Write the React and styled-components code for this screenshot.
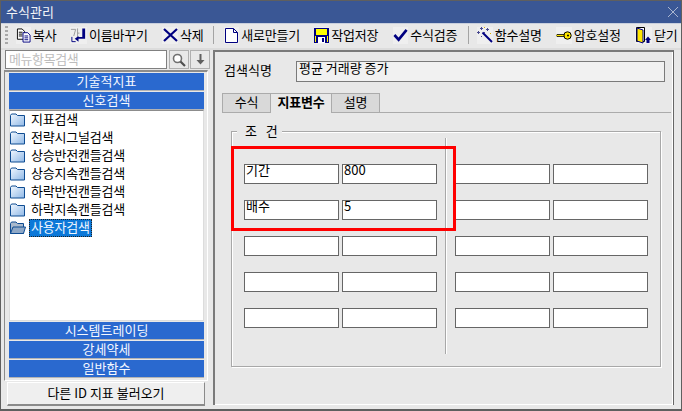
import React from "react";
import styled, { createGlobalStyle } from "styled-components";

const Global = createGlobalStyle`
  html, body { margin: 0; padding: 0; background: #e8e8e8; overflow: hidden; }
  * { box-sizing: border-box; }
`;

const Window = styled.div`
  width: 682px; height: 411px; display: flex; flex-direction: column;
  background: #e8e8e8; border: 1px solid #5f5f5f; border-bottom-width: 2px;
  font-family: "Noto Sans CJK KR", "Noto Sans", sans-serif; font-size: 13px; line-height: 16px; color: #000;
  letter-spacing: -0.2px; position: relative; overflow: hidden;
`;
const TitleBar = styled.div`
  height: 22px; flex: none; background: #3a5795; color: #f2f4f8; display: flex; align-items: center;
  justify-content: space-between; padding: 0 1px 0 5px; letter-spacing: 0;
`;
const Toolbar = styled.div`
  height: 27px; flex: none; display: flex; align-items: center; padding: 0 0 2px 4px;
  border-top: 1px solid #c8cfdd; border-bottom: 2px solid #dcdcdc;
`;
const Grip = styled.div`
  width: 3px; height: 19px; margin-right: 8px; flex: none;
  background: repeating-linear-gradient(to bottom, #a8a8a8 0 2px, transparent 2px 4px);
`;
const ToolButton = styled.div`
  display: flex; align-items: center; gap: 2px; margin-right: ${p => p.$gap}px; flex: none; white-space: nowrap;
`;
const IconCell = styled.span`
  display: flex; align-items: center; justify-content: center; width: ${p => p.$w}px; height: 17px;
  background: #efefef; flex: none;
`;
const Sep = styled.div`
  width: 1px; height: 18px; background: #a4a4a4; margin-right: ${p => p.$r}px; flex: none;
`;
const Body = styled.div`
  flex: 1; min-height: 0; display: flex; padding: 0 7px 4px 3px; gap: 5px;
`;
const Side = styled.div`
  width: 204px; flex: none; display: flex; flex-direction: column;
`;
const SearchRow = styled.div`
  height: 19px; display: flex; gap: 1px; padding-left: 1px; margin-bottom: 1px; flex: none;
`;
const SearchInput = styled.div`
  width: 162px; height: 19px; margin-right: 1px; flex: none; background: #fff; border: 1px solid #808080; color: #bdbdbd;
  padding: 0 3px; line-height: 15px; letter-spacing: -0.4px;
`;
const SquareBtn = styled.div`
  width: 20px; height: 19px; flex: none; border: 1px solid #b0b0b0; background: #e8e8e8; display: flex; align-items: center; justify-content: center;
`;
const Accordion = styled.div`
  height: 311px; flex: none; display: flex; flex-direction: column; padding: 1px 3px 1px 4px;
  border: 1px solid #8c8c8c; border-top-width: 2px; border-right: 1px solid #fff; border-bottom: 1px solid #fff;
`;
const Bar = styled.div`
  height: 18px; flex: none; background: #2a69cf; color: #f5f8ff; text-align: center; line-height: 16px;
  border-bottom: 1px solid #b4b4b4; margin-bottom: 1px; letter-spacing: 0;
`;
const Tree = styled.div`
  flex: 1; min-height: 0; background: #fff; border: 1px solid #dcdcdc; border-top: 1px solid #8c8c8c;
  margin-top: -1px; margin-bottom: 1px;
`;
const TreeRow = styled.div`
  height: 18px; display: flex; align-items: center; gap: 5px;
`;
const TreeLabel = styled.span`
  height: 18px; line-height: 16px; padding: 0 ${p => (p.$selected ? "2px" : "0")};
  margin-left: ${p => (p.$selected ? "-2px" : "0")};
  background: ${p => (p.$selected ? "#0c78d8" : "transparent")};
  color: ${p => (p.$selected ? "#eef6ff" : "#000")};
  outline: ${p => (p.$selected ? "1px dotted #222" : "none")}; outline-offset: -1px;
`;
const LoadBtn = styled.div`
  width: 198px; height: 24px; margin: 1px 0 0 3px; background: #efefef; text-align: center; line-height: 20px; flex: none;
  border: 1px solid #fff; border-right: 1px solid #8a8a8a; border-bottom: 2px solid #8a8a8a; letter-spacing: 0;
`;
const Main = styled.div`
  flex: 1; min-width: 0; display: flex; flex-direction: column; border-top: 2px solid #7a7a7a; border-left: 2px solid #7a7a7a;
  border-right: 1px solid #666; padding: 9px 0 0 7px; box-shadow: inset -1px -1px 0 #fff;
`;
const NameRow = styled.div`
  display: flex; align-items: flex-start; height: 20px; flex: none; padding-left: 2px;
`;
const NameLabel = styled.span`
  width: 72px; line-height: 18px; letter-spacing: 0;
`;
const NameInput = styled.div`
  width: 369px; height: 21px; border: 1px solid #7a7a7a; background: #f1f1f1; padding: 0 2px; line-height: 11px; letter-spacing: 0;
`;
const Tabs = styled.div`
  display: flex; margin-top: 12px; height: 20px; flex: none; position: relative; z-index: 1;
`;
const Tab = styled.div`
  width: ${p => p.$w}px; height: 20px; text-align: center; line-height: 16px;
  background: ${p => (p.$active ? "#e8e8e8" : "#d9d9d9")}; font-weight: ${p => (p.$active ? 700 : 400)};
  border: 1px solid #ababab; border-left-width: ${p => (p.$active ? 0 : 1)}px; border-right-width: ${p => (p.$active ? 0 : 1)}px;
  border-bottom-color: ${p => (p.$active ? "#e8e8e8" : "#ababab")};
`;
const TabPanel = styled.div`
  flex: 1; min-height: 0; border-top: 1px solid #ababab; margin-top: -1px; margin-right: 2px; padding: 18px 0 0 9px;
`;
const Group = styled.div`
  position: relative; width: 430px; height: 236px; border: 1px solid #a8a8a8; box-shadow: inset 1px 1px 0 #fff, 1px 1px 0 #fff;
  display: grid; grid-template-columns: 201px 1fr; padding: 6px 0 0 12px;
`;
const Legend = styled.span`
  position: absolute; top: -8px; left: 5px; background: #e8e8e8; padding: 0 1px 0 8px; letter-spacing: 3px;
  line-height: 13px; height: 15px;
`;
const Col = styled.div`
  height: 216px; display: grid; grid-template-columns: 95px 95px; column-gap: 3px; row-gap: 16px; padding-top: 26px;
  grid-auto-rows: 20px; align-content: start;
`;
const RightCol = styled(Col)`
  border-left: 1px solid #a8a8a8; box-shadow: inset 1px 0 0 #fff; padding-left: 9px;
`;
const Field = styled.div`
  height: 20px; background: #fff; border: 1px solid #666; padding: 0 1px; line-height: 10px; letter-spacing: 0;
`;
const RedBox = styled.div`
  position: absolute; left: 230px; top: 145px; width: 225px; height: 85px; border: 3px solid #f00; pointer-events: none;
`;

const Folder = ({ open }) => (
  <svg width="16" height="14" viewBox="0 0 16 14">
    <defs>
      <linearGradient id="fg" x1="0" y1="0" x2="1" y2="1">
        <stop offset="0" stopColor="#f2f8ff" />
        <stop offset="1" stopColor="#8fb8e6" />
      </linearGradient>
    </defs>
    {open ? (
      <>
        <path d="M.5 2.5 L1.5 1 H6 L7.5 2.5 H13.5 V12.5 H.5 Z" fill="#a9b9cc" stroke="#0f4c92" />
        <path d="M3 6 H15.5 L13.5 12.5 H.5 Z" fill="#8fa8c6" stroke="#0f4c92" />
      </>
    ) : (
      <path d="M.5 2.5 L1.5 1 H6 L7.5 2.5 H14.5 V13 H.5 Z" fill="url(#fg)" stroke="#0f4c92" />
    )}
  </svg>
);

const Navy = "#000080";
const IcoCopy = () => (
  <svg width="15" height="15" viewBox="0 0 16 15">
    <path d="M1.5 .5 H6.5 L9 3 V11.5 H1.5 Z" fill="#fff" stroke="#000" />
    <path d="M3 4 H7 M3 6 H7 M3 8 H7" stroke="#000" />
    <path d="M7.5 4.5 H12.5 L15 7 V14.5 H7.5 Z" fill="#fff" stroke="#000080" />
    <path d="M9 8 H13 M9 10 H13 M9 12 H13" stroke="#000080" />
  </svg>
);
const IcoRename = () => (
  <svg width="17" height="17" viewBox="0 0 18 17">
    <path d="M1 2 H6 L4 9 M8 1 V11 M8 6 H10" fill="none" stroke="#9a9a9a" />
    <path d="M2 10 V15 H6" fill="none" stroke="#000080" />
    <path d="M13 1 H16 V12 H9 V15 L5 12 L9 9 V10 H13 Z" fill="#000080" />
  </svg>
);
const IcoX = () => (
  <svg width="15" height="14" viewBox="0 0 15 14">
    <path d="M1 1 L14 13 M14 1 L1 13" stroke={Navy} strokeWidth="2.2" />
  </svg>
);
const IcoNew = () => (
  <svg width="13" height="15" viewBox="0 0 13 15">
    <path d="M.5 .5 H8.5 L12.5 4.5 V14.5 H.5 Z" fill="#fff" stroke={Navy} />
    <path d="M8.5 .5 V4.5 H12.5" fill="none" stroke={Navy} />
  </svg>
);
const IcoSave = () => (
  <svg width="15" height="15" viewBox="0 0 16 15" shapeRendering="crispEdges">
    <rect x="0" y="0" width="16" height="15" fill={Navy} />
    <rect x="2" y="1" width="12" height="6" fill="#ffff00" />
    <rect x="4" y="9" width="8" height="6" fill="#fff" />
    <rect x="9" y="10" width="2" height="4" fill={Navy} />
    <rect x="1" y="8" width="1" height="6" fill="#ffff00" />
    <rect x="14" y="8" width="1" height="6" fill="#ffff00" />
  </svg>
);
const IcoCheck = () => (
  <svg width="15" height="14" viewBox="0 0 16 14">
    <path d="M1.5 7 L6 12 L14.5 1.5" fill="none" stroke={Navy} strokeWidth="2.8" />
  </svg>
);
const IcoWand = () => (
  <svg width="16" height="16" viewBox="0 0 16 16" shapeRendering="crispEdges">
    <path d="M5.5 5.5 L15 15" stroke={Navy} strokeWidth="2" shapeRendering="auto" />
    <path d="M4 0 H5 V3 H4 Z M3 1 H6 V2 H3 Z M0 5 H3 V6 H0 Z M1 4 H2 V7 H1 Z M9 2 H12 V3 H9 Z M10 1 H11 V4 H10 Z M7 5 H8 V6 H7 Z M4 9 H5 V10 H4 Z" fill="#4a4a90" />
    <path d="M13 6 H14 V7 H13 Z M7 0 H8 V1 H7 Z" fill="#e0b000" />
  </svg>
);
const IcoKey = () => (
  <svg width="16" height="9" viewBox="0 0 16 9">
    <circle cx="11.5" cy="4.5" r="3.7" fill="#ffe600" stroke="#000" />
    <circle cx="12" cy="4.5" r="1" fill="#000" />
    <path d="M8 3.5 H1 L0 4.5 L1 5.5 H8 Z" fill="#ffe600" stroke="#000" strokeWidth="0.8" />
  </svg>
);
const IcoDoor = () => (
  <svg width="17" height="17" viewBox="0 0 17 17">
    <path d="M1.5 .5 H9.5 V14.5 H1.5 Z" fill="#fff" stroke="#000" />
    <path d="M2 1 L8 3 V16 L2 14 Z" fill="#ffe600" stroke={Navy} />
    <path d="M10 13 L13 9.5 L16 13 H14.5 V16 H11.5 V13 Z" fill={Navy} />
  </svg>
);
const IcoSearch = () => (
  <svg width="14" height="14" viewBox="0 0 14 14">
    <circle cx="5.5" cy="5.5" r="4" fill="#fff" stroke="#707070" strokeWidth="1.6" />
    <path d="M8.5 8.5 L13 13" stroke="#505050" strokeWidth="2.2" />
  </svg>
);
const IcoDown = () => (
  <svg width="9" height="11" viewBox="0 0 9 11">
    <path d="M4.5 0 V8" stroke="#606060" strokeWidth="2" />
    <path d="M0.5 6 H8.5 L4.5 10.5 Z" fill="#606060" />
  </svg>
);
const IcoClose = () => (
  <svg width="14" height="12" viewBox="0 0 14 12">
    <path d="M2 1 L12 11 M12 1 L2 11" stroke="#aab6d0" strokeWidth="1" />
  </svg>
);

const tools = [
  { k: "복사", i: <IcoCopy />, w: 15, g: 13.5 },
  { k: "이름바꾸기", i: <IcoRename />, w: 17, g: 14.25 },
  { k: "삭제", i: <IcoX />, w: 16, g: 9.5 },
  { sep: 10 },
  { k: "새로만들기", i: <IcoNew />, w: 15, g: 14.25 },
  { k: "작업저장", i: <IcoSave />, w: 15, g: 15 },
  { k: "수식검증", i: <IcoCheck />, w: 15, g: 10.5 },
  { sep: 8 },
  { k: "함수설명", i: <IcoWand />, w: 16, g: 14 },
  { k: "암호설정", i: <IcoKey />, w: 16, g: 14 },
  { k: "닫기", i: <IcoDoor />, w: 17, g: 0 },
];
const folders = ["지표검색", "전략시그널검색", "상승반전캔들검색", "상승지속캔들검색", "하락반전캔들검색", "하락지속캔들검색", "사용자검색"];
const left = ["기간", "800", "배수", "5", "", "", "", "", "", ""];
const right = Array(10).fill("");

export default function App() {
  return (
    <Window>
      <Global />
      <TitleBar>
        <span>수식관리</span>
        <IcoClose />
      </TitleBar>
      <Toolbar>
        <Grip />
        {tools.map((t, i) =>
          t.sep ? (
            <Sep key={i} $r={t.sep} />
          ) : (
            <ToolButton key={t.k} $gap={t.g}>
              <IconCell $w={t.w}>{t.i}</IconCell>
              {t.k}
            </ToolButton>
          )
        )}
      </Toolbar>
      <Body>
        <Side>
          <SearchRow>
            <SearchInput>메뉴항목검색</SearchInput>
            <SquareBtn><IcoSearch /></SquareBtn>
            <SquareBtn><IcoDown /></SquareBtn>
          </SearchRow>
          <Accordion>
            <Bar>기술적지표</Bar>
            <Bar>신호검색</Bar>
            <Tree>
              {folders.map((f, i) => (
                <TreeRow key={f}>
                  <Folder open={i === 6} />
                  <TreeLabel $selected={i === 6}>{f}</TreeLabel>
                </TreeRow>
              ))}
            </Tree>
            <Bar>시스템트레이딩</Bar>
            <Bar>강세약세</Bar>
            <Bar>일반함수</Bar>
          </Accordion>
          <LoadBtn>다른 ID 지표 불러오기</LoadBtn>
        </Side>
        <Main>
          <NameRow>
            <NameLabel>검색식명</NameLabel>
            <NameInput>평균 거래량 증가</NameInput>
          </NameRow>
          <Tabs>
            <Tab $w={49}>수식</Tab>
            <Tab $w={60} $active>지표변수</Tab>
            <Tab $w={49}>설명</Tab>
          </Tabs>
          <TabPanel>
            <Group>
              <Legend>조 건</Legend>
              <Col>
                {left.map((v, i) => <Field key={i}>{v}</Field>)}
              </Col>
              <RightCol>
                {right.map((v, i) => <Field key={i}>{v}</Field>)}
              </RightCol>
            </Group>
          </TabPanel>
        </Main>
      </Body>
      <RedBox />
    </Window>
  );
}
